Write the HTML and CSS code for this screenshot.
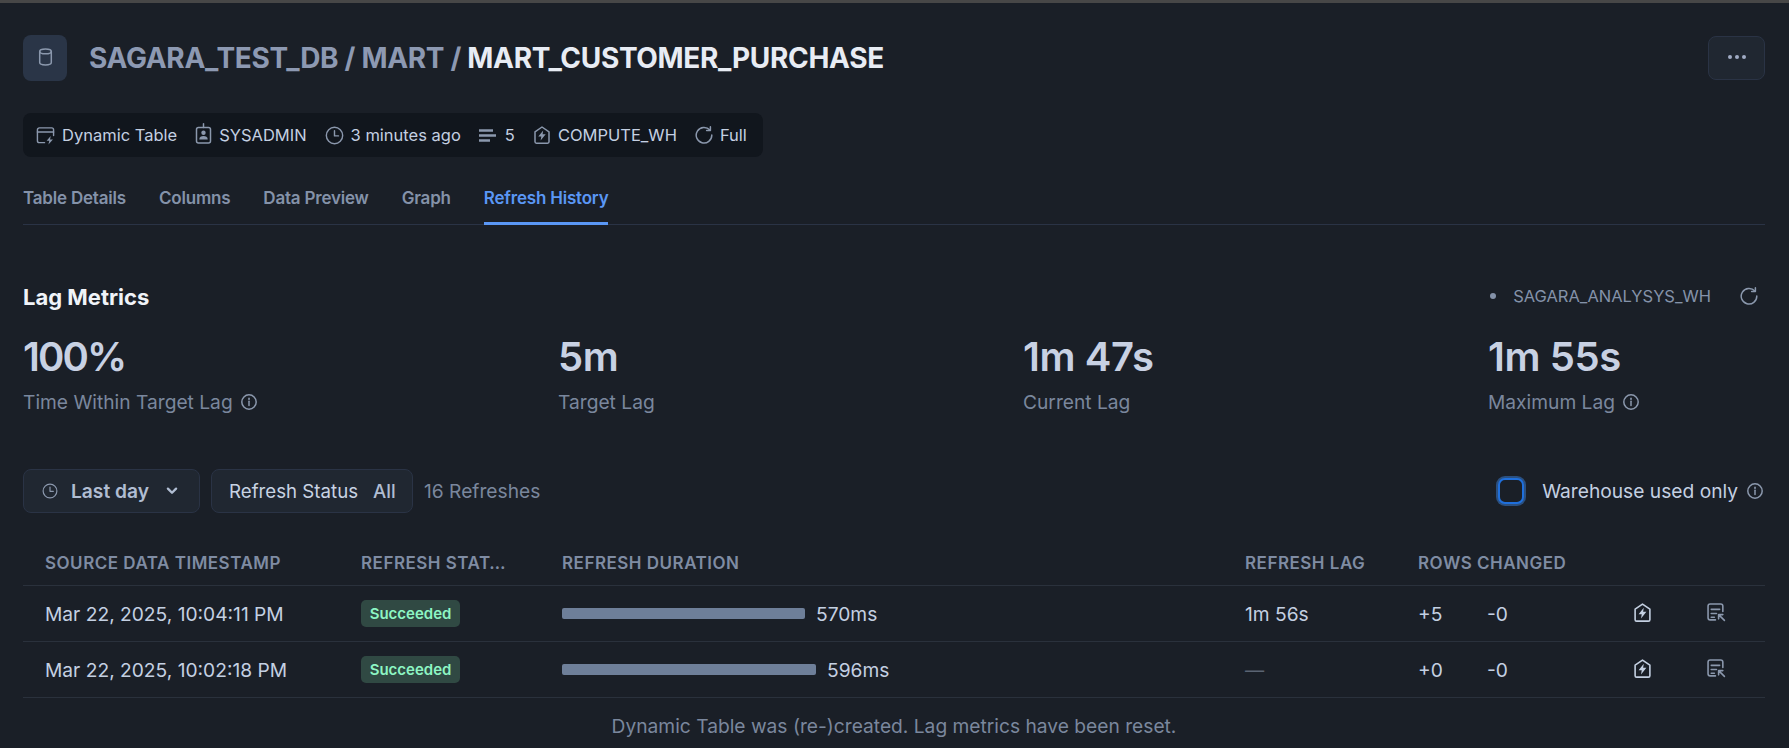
FILE: index.html
```html
<!DOCTYPE html>
<html lang="en">
<head>
<meta charset="utf-8">
<title>MART_CUSTOMER_PURCHASE</title>
<link rel="stylesheet" href="styles.css">
</head>
<body>
<svg class="defs" width="0" height="0" aria-hidden="true">
  <symbol id="i-clock" viewBox="0 0 20 20"><circle cx="10" cy="10" r="8.6"/><path d="M10 5v5.4h4.2"/></symbol>
  <symbol id="i-wh" viewBox="0 0 16 18"><path d="M1 5.800 8 1l7 4.800v10a1.400 1.400 0 0 1-1.400 1.400H2.400A1.400 1.400 0 0 1 1 15.800z"/><path class="fill" d="M9.200 4.600 4.300 10.600h3l-.7 4 5.100-6.300H8.600z"/></symbol>
  <symbol id="i-refresh" viewBox="0 0 18 18"><path d="M14.900 4.100A7.800 7.800 0 1 0 16.800 9"/><path d="M15.400 .8v3.800h-3.800"/></symbol>
  <symbol id="i-info" viewBox="0 0 16 16"><circle cx="8" cy="8" r="7.200"/><path d="M8 7.200v4.200"/><path d="M8 4.300v1.300"/></symbol>
  <symbol id="i-log" viewBox="0 0 18 18"><path d="M8 16H3a2 2 0 0 1-2-2V3a2 2 0 0 1 2-2h10a2 2 0 0 1 2 2v5"/><path d="M4 6h8M4 10h5M4 13.500h3"/><path d="M16.500 16.500 11 11M11 15v-4h4"/></symbol>
</svg>

<main class="page">
  <header class="head">
    <div class="db-tile">
      <svg class="ico db" viewBox="0 0 14 18"><ellipse cx="7" cy="3.400" rx="5.800" ry="2.400"/><path d="M1.200 3.400v11.200c0 1.400 2.600 2.400 5.800 2.400s5.800-1 5.800-2.400V3.400"/></svg>
    </div>
    <h1 class="crumbs">SAGARA_TEST_DB / MART / <span class="crumb-now">MART_CUSTOMER_PURCHASE</span></h1>
    <button class="more" aria-label="More"><span></span><span></span><span></span></button>
  </header>

  <ul class="chips">
    <li class="chip">
      <svg class="ico dyn" viewBox="0 0 20 20"><path d="M9 17.500H3.500a2 2 0 0 1-2-2V4a2 2 0 0 1 2-2h13a2 2 0 0 1 2 2v6"/><path d="M1.500 6.300h17"/><path class="fill" d="M15.500 10.500l-4.300 5h2.800l-.9 4 4.700-5.400h-3z"/></svg>
      Dynamic Table
    </li>
    <li class="chip">
      <svg class="ico user" viewBox="0 0 16 21"><rect x="1" y="4.500" width="14" height="15.500" rx="2"/><path d="M8 .8v3.700"/><circle class="fill" cx="8" cy="9.800" r="2.200"/><path class="fill" d="M3.800 16.500c0-2.400 1.900-3.400 4.200-3.400s4.200 1 4.200 3.400z"/></svg>
      SYSADMIN
    </li>
    <li class="chip"><svg class="ico ic19"><use href="#i-clock"/></svg>3 minutes ago</li>
    <li class="chip">
      <svg class="ico lines" viewBox="0 0 17 13"><path d="M0 1.500h14M0 6.500h17M0 11.500h11"/></svg>
      <span>5</span>
    </li>
    <li class="chip"><svg class="ico wh"><use href="#i-wh"/></svg>COMPUTE_WH</li>
    <li class="chip"><svg class="ico ic18"><use href="#i-refresh"/></svg>Full</li>
  </ul>

  <nav class="tabs">
    <a class="tab">Table Details</a>
    <a class="tab">Columns</a>
    <a class="tab">Data Preview</a>
    <a class="tab">Graph</a>
    <a class="tab tab-on">Refresh History</a>
  </nav>

  <section class="lag">
    <div class="lag-head">
      <h2 class="lag-title">Lag Metrics</h2>
      <div class="lag-wh">
        <span class="dot"></span>
        <span class="wh-name">SAGARA_ANALYSYS_WH</span>
        <svg class="ico ic17"><use href="#i-refresh"/></svg>
      </div>
    </div>
    <div class="metrics">
      <div class="metric"><div class="val val-tight">100%</div><div class="lbl">Time Within Target Lag <svg class="ico ic16"><use href="#i-info"/></svg></div></div>
      <div class="metric"><div class="val">5m</div><div class="lbl">Target Lag</div></div>
      <div class="metric"><div class="val">1m 47s</div><div class="lbl">Current Lag</div></div>
      <div class="metric"><div class="val">1m 55s</div><div class="lbl">Maximum Lag <svg class="ico ic16"><use href="#i-info"/></svg></div></div>
    </div>
  </section>

  <div class="filters">
    <button class="btn btn-range">
      <svg class="ico ic16"><use href="#i-clock"/></svg>
      <span class="range-txt">Last day</span>
      <svg class="ico chev" viewBox="0 0 12 8"><path d="M2.500 2l3.500 3.500L9.500 2"/></svg>
    </button>
    <button class="btn btn-status">Refresh Status<span class="all">All</span></button>
    <span class="count">16 Refreshes</span>
    <label class="wh-only">
      <span class="check"></span>
      <span class="wh-txt">Warehouse used only</span>
      <svg class="ico ic16"><use href="#i-info"/></svg>
    </label>
  </div>

  <div class="table">
    <div class="row row-h">
      <div>SOURCE DATA TIMESTAMP</div><div>REFRESH STAT…</div><div>REFRESH DURATION</div><div>REFRESH LAG</div><div>ROWS CHANGED</div><div></div><div></div><div></div>
    </div>
    <div class="row">
      <div>Mar 22, 2025, 10:04:11 PM</div>
      <div><span class="badge">Succeeded</span></div>
      <div class="dur"><span class="bar" style="width:243px"></span>570ms</div>
      <div>1m 56s</div>
      <div>+5</div>
      <div>-0</div>
      <div><svg class="ico wh-a"><use href="#i-wh"/></svg></div>
      <div><svg class="ico log"><use href="#i-log"/></svg></div>
    </div>
    <div class="row">
      <div>Mar 22, 2025, 10:02:18 PM</div>
      <div><span class="badge">Succeeded</span></div>
      <div class="dur"><span class="bar" style="width:254px"></span>596ms</div>
      <div class="none">—</div>
      <div>+0</div>
      <div>-0</div>
      <div><svg class="ico wh-a"><use href="#i-wh"/></svg></div>
      <div><svg class="ico log"><use href="#i-log"/></svg></div>
    </div>
  </div>
  <p class="note">Dynamic Table was (re-)created. Lag metrics have been reset.</p>
</main>
</body>
</html>
```

FILE: styles.css
```css
* { box-sizing: border-box; }
html, body { margin: 0; height: 100%; }
body {
  background: #1a1f27;
  color: #c8d3e3;
  font-family: Inter, "Liberation Sans", sans-serif;
  overflow: hidden;
}
.defs { display: block; height: 0; }
.page {
  height: 748px;
  border-top: 3px solid #474747;
  padding: 32px 24px 0 23px;
}
.ico {
  color: #8b98ad;
  fill: none;
  stroke: currentColor;
  stroke-width: 1.500;
  stroke-linecap: round;
  stroke-linejoin: round;
  flex: none;
}
.fill { fill: currentColor; stroke: none; }
.ic16 { width: 16px; height: 16px; }
.ic17 { width: 18px; height: 18px; }
.ic18 { width: 18px; height: 18px; }
.ic19 { width: 19px; height: 19px; }

.head { display: flex; align-items: center; height: 46px; }
.db-tile {
  width: 44px; height: 46px;
  background: #2a3547;
  border-radius: 8px;
  display: flex; align-items: center; justify-content: center;
}
.db { width: 15px; height: 18px; margin-top: -2px; }
.crumbs {
  margin: 0 0 0 22px;
  font-size: 28px;
  font-weight: 700;
  line-height: 46px;
  letter-spacing: -.33px;
  color: #8d99b2;
}
.crumb-now { color: #e8ecf4; }
.more {
  margin-left: auto;
  width: 57px; height: 44px;
  background: #202731;
  border: 1px solid #2a3345;
  border-radius: 8px;
  display: flex; align-items: center; justify-content: center; gap: 3px;
  padding: 0 0 2px;
}
.more span { width: 4px; height: 4px; border-radius: 50%; background: #a0abc4; }

.chips {
  list-style: none;
  margin: 32px 0 0;
  padding: 0 16px 0 13px;
  width: max-content;
  height: 44px;
  display: flex; align-items: center; gap: 18px;
  background: #11161d;
  border-radius: 8px;
  font-size: 16.500px;
}
.chip { display: flex; align-items: center; gap: 7px; color: #c4d0e2; white-space: nowrap; }
.dyn { width: 19px; height: 19px; }
.user { width: 17px; height: 21px; margin-top: -3px; }
.lines { width: 17px; height: 13px; stroke-width: 2.600; stroke-linecap: butt; margin-right: 2px; }
.wh { width: 16px; height: 18px; margin-left: 1px; margin-right: 1px; }

.tabs {
  display: flex; gap: 33px;
  margin-top: 18px;
  height: 50px;
  border-bottom: 1px solid #2a3345;
}
.tab {
  height: 50px;
  padding-top: 13px;
  font-size: 17px;
  line-height: 20px;
  font-weight: 600;
  letter-spacing: -.2px;
  color: #8492a9;
}
.tab-on { color: #5a97f5; border-bottom: 3px solid #5a97f5; }

.lag { margin-top: 58px; }
.lag-head { display: flex; align-items: center; justify-content: space-between; height: 28px; }
.lag-title { margin: 0; font-size: 22px; font-weight: 700; color: #f0f3f8; }
.lag-wh { display: flex; align-items: center; font-size: 16.500px; color: #8492a9; margin-top: -2px; margin-right: 7px; }
.dot { width: 6px; height: 6px; border-radius: 50%; background: #8492a9; margin-right: 17px; }
.wh-name { margin-right: 29px; }
.metrics {
  display: grid;
  grid-template-columns: 535px 465px 465px 1fr;
  margin-top: 22px;
}
.val { font-size: 40px; line-height: 48px; font-weight: 600; color: #c8d1e3; letter-spacing: -.4px; }
.val-tight { letter-spacing: -1.900px; }
.lbl { display: flex; align-items: center; gap: 8px; margin-top: 9px; font-size: 19.200px; line-height: 24px; color: #7a879d; }

.filters { display: flex; align-items: center; margin-top: 55px; height: 44px; }
.btn {
  height: 44px;
  background: #202731;
  border: 1px solid #2a3345;
  border-radius: 8px;
  font: inherit;
  display: flex; align-items: center;
  color: #c8d3e3;
}
.btn-range { width: 177px; padding: 0 0 0 18px; }
.range-txt { margin-left: 13px; font-size: 19.200px; font-weight: 600; color: #b0bdd2; }
.chev { width: 14px; height: 10px; margin-left: 16px; color: #b0bdd2; stroke-width: 2; }
.btn-status { margin-left: 11px; width: 202px; padding: 0 0 0 17px; font-size: 18.700px; white-space: nowrap; }
.all { margin-left: 15px; color: #b0bdd2; font-weight: 500; }
.count { margin-left: 11px; font-size: 19.200px; color: #7a879d; }
.wh-only { margin-left: auto; margin-right: 2px; display: flex; align-items: center; }
.check {
  width: 26px; height: 26px;
  border-radius: 7px;
  border: 2px solid #1f6fdc;
  box-shadow: 0 0 0 2px #2b5080;
  background: #1a1f27;
}
.wh-txt { margin-left: 18px; margin-right: 9px; font-size: 19.200px; color: #c4d0e2; }

.table { margin-top: 27px; }
.row {
  display: grid;
  grid-template-columns: 316px 201px 683px 173px 69px 147px 73px 53px;
  align-items: center;
  height: 56px;
  padding-left: 22px;
  border-bottom: 1px solid #2a313c;
  font-size: 19.200px;
  color: #c4d0e2;
  white-space: nowrap;
}
.row-h {
  height: 46px;
  font-size: 17px;
  font-weight: 600;
  letter-spacing: .5px;
  color: #7f8ca3;
}
.badge {
  display: inline-block;
  width: 99px; height: 27px;
  line-height: 27px;
  text-align: center;
  background: #304943;
  color: #8df5c3;
  border-radius: 5px;
  font-size: 15px;
  font-weight: 600;
}
.dur { display: flex; align-items: center; gap: 11px; }
.bar { height: 11px; background: #6e7f99; border-radius: 2px; }
.none { color: #5a6473; }
.wh-a { width: 17px; height: 19px; display: block; color: #c4d0e2; margin-top: -3px; }
.log { width: 19px; height: 19px; display: block; margin-top: -2px; }
.note { margin: 16px 0 0; text-align: center; font-size: 19.200px; line-height: 24px; color: #7a879d; }
```
